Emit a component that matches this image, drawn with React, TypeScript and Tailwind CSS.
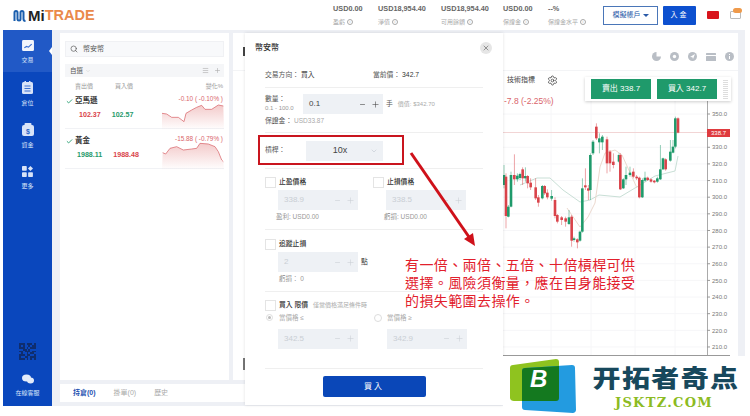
import { Check, ChevronDown, Menu, Minus, Plus, Search, Settings, X } from "lucide-react";

type Candle = [number, number, number, number, number, "g" | "r"];

const GREEN = "#1f9a6b";
const RED = "#d9434a";

// positions are in 3x crop units, converted when drawn
const candles: Candle[] = [
  [12, 195, 225, 165, 235, "g"], [18, 200, 318, 190, 355, "r"], [25, 290, 320, 285, 322, "g"], [33, 195, 290, 185, 292, "g"],
  [43, 195, 208, 133, 225, "r"], [52, 197, 208, 190, 215, "g"], [60, 192, 204, 188, 210, "g"], [68, 178, 205, 172, 225, "r"],
  [76, 198, 205, 172, 215, "g"], [83, 198, 220, 195, 235, "r"], [92, 218, 232, 205, 240, "r"], [107, 232, 265, 205, 270, "r"],
  [115, 262, 278, 255, 290, "r"], [127, 228, 265, 225, 268, "g"], [134, 228, 250, 225, 255, "r"], [142, 248, 262, 238, 268, "r"],
  [155, 258, 266, 240, 272, "g"], [165, 270, 318, 262, 325, "r"], [172, 315, 335, 312, 340, "r"], [185, 322, 330, 318, 345, "r"],
  [197, 325, 335, 320, 350, "r"], [207, 322, 342, 300, 345, "g"], [215, 320, 392, 315, 410, "r"], [222, 385, 390, 380, 395, "g"],
  [232, 388, 397, 385, 415, "r"], [240, 365, 392, 362, 395, "g"], [247, 235, 365, 205, 368, "g"], [256, 226, 232, 175, 240, "r"],
  [265, 235, 242, 225, 270, "r"], [271, 135, 240, 130, 270, "g"], [279, 95, 130, 90, 135, "g"], [289, 50, 85, 40, 90, "r"],
  [298, 85, 97, 70, 130, "g"], [307, 80, 97, 75, 120, "g"], [321, 88, 160, 80, 190, "r"], [330, 125, 160, 120, 185, "r"],
  [340, 155, 165, 130, 175, "r"], [357, 135, 155, 130, 158, "g"], [361, 135, 238, 130, 240, "r"], [370, 208, 235, 205, 237, "g"],
  [378, 195, 208, 170, 225, "g"], [390, 188, 195, 170, 200, "g"], [400, 185, 200, 175, 205, "r"], [410, 200, 205, 195, 210, "r"],
  [418, 203, 262, 200, 265, "r"], [427, 210, 262, 205, 264, "g"], [435, 203, 212, 185, 215, "g"], [443, 203, 210, 200, 213, "r"],
  [453, 208, 215, 205, 218, "r"], [463, 212, 217, 210, 220, "r"], [472, 205, 215, 200, 218, "g"], [481, 178, 208, 105, 210, "g"],
  [489, 145, 178, 143, 180, "g"], [497, 148, 178, 145, 182, "r"], [511, 125, 152, 90, 155, "g"], [519, 110, 128, 90, 130, "g"],
  [526, 25, 110, 20, 115, "g"], [534, 25, 68, 22, 70, "r"],
];

const axisLabels = [350, 330, 320, 310, 300, 290, 280, 270, 260, 250, 240, 230, 220, 210];
const priceY = (v: number) => 114 + (350 - v) * 1.664;

const stats = [
  { value: "USD0.00", label: "盈虧", width: "w-[45px]" },
  { value: "USD18,954.40", label: "淨值", width: "w-[63px]" },
  { value: "USD18,954.40", label: "可用餘額", width: "w-[62px]" },
  { value: "USD0.00", label: "保證金", width: "w-[45px]" },
  { value: "--%", label: "保證金水平", width: "w-[55px]" },
];

const Info = () => (
  <span className="ml-[2px] inline-flex h-[6px] w-[6px] items-center justify-center rounded-full border-[0.5px] border-[#aaa] text-[4px] leading-none text-[#aaa]">i</span>
);

const NavIcon = ({ name }: { name: string }) => {
  if (name === "交易") {
    return (
      <svg width="12" height="11" viewBox="0 0 13 12">
        <rect width="13" height="12" rx="1.5" fill="#f3f6fc" />
        <path d="M2.5 8.5 5 7l2 .8 3.5-3.3" stroke="#3a6fd0" strokeWidth="1.2" fill="none" />
      </svg>
    );
  }
  if (name === "倉位") {
    return (
      <svg width="11" height="13" viewBox="0 0 11 13">
        <rect y="1" width="11" height="12" rx="1.5" fill="#d8e3f8" />
        <rect x="2.5" width="1.5" height="2.5" fill="#d8e3f8" />
        <rect x="7" width="1.5" height="2.5" fill="#d8e3f8" />
        <path d="M2.5 5h6M2.5 7.5h6M2.5 10h6" stroke="#3a6fd0" strokeWidth="1" />
      </svg>
    );
  }
  if (name === "資金") {
    return (
      <svg width="12" height="13" viewBox="0 0 12 13">
        <rect y="2" width="12" height="11" rx="2" fill="#d8e3f8" />
        <rect x="2.5" width="7" height="2.5" rx="1" fill="#d8e3f8" />
        <text x="6" y="10.5" textAnchor="middle" fontSize="7" fontWeight="700" fill="#2b62c6" fontFamily="Liberation Sans">$</text>
      </svg>
    );
  }
  return (
    <svg width="11" height="11" viewBox="0 0 12 12" fill="#d8e3f8">
      <rect width="5.2" height="5.2" rx="0.8" />
      <path d="M9.2 0 12 2.7 9.2 5.4 6.5 2.7z" />
      <rect y="6.7" width="5.2" height="5.2" rx="0.8" />
      <rect x="6.7" y="6.7" width="5.2" height="5.2" rx="0.8" />
    </svg>
  );
};

const QrCode = () => {
  const cells = "111011101 101001011 111010111 001101000 110111011 010010110 111011001 100110111 111010101";
  return (
    <svg width="17" height="17" viewBox="0 0 9 9" shapeRendering="crispEdges">
      {cells.split(" ").map((row, y) =>
        row.split("").map((c, x) => (c === "1" ? <rect key={`${x}-${y}`} x={x} y={y} width="1" height="1" fill="#0f2d6e" /> : null))
      )}
    </svg>
  );
};

const Sidebar = () => (
  <aside className="flex w-[49px] flex-col bg-[#0a47bd] text-[#dbe6fa]">
    {["交易", "倉位", "資金", "更多"].map((name, i) => (
      <div key={name} className={`relative flex h-[42px] flex-col items-center justify-center gap-[6px] pt-[1px] ${i === 0 ? "bg-[#2159c6]" : ""}`}>
        <NavIcon name={name} />
        <span className="text-[6px] leading-[7px]">{name}</span>
        {i === 0 && <span className="absolute right-0 top-[17px] h-0 w-0 border-y-[4px] border-r-[3px] border-y-transparent border-r-white" />}
      </div>
    ))}
    <div className="mt-auto flex flex-col items-center pb-[9px]">
      <QrCode />
      <svg className="mt-[14px]" width="12" height="10" viewBox="0 0 12 10" fill="#e3ebfa">
        <ellipse cx="4.5" cy="4" rx="4.5" ry="3.6" />
        <ellipse cx="8.5" cy="6.5" rx="3.5" ry="3" />
      </svg>
      <span className="mt-[5px] text-[6px] leading-[8px]">在線客服</span>
    </div>
  </aside>
);

const Spark = ({ points, id }: { points: string; id: string }) => (
  <svg width="62" height="30" viewBox="486 300 186 90" className="block">
    <defs>
      <linearGradient id={id} x1="0" y1="0" x2="0" y2="1">
        <stop offset="0" stopColor="#e58b8b" stopOpacity="0.45" />
        <stop offset="1" stopColor="#e58b8b" stopOpacity="0" />
      </linearGradient>
    </defs>
    <polygon points={`486,390 ${points} 672,390`} fill={`url(#${id})`} />
    <polyline points={points} fill="none" stroke="#d9656b" strokeWidth="2.2" />
  </svg>
);

const WatchRow = ({ name, sell, buy, sellColor, buyColor, change, nameOffset, points, id }: {
  name: string; sell: string; buy: string; sellColor: string; buyColor: string; change: string; nameOffset: string; points: string; id: string;
}) => (
  <div className="relative h-[40px] border-b border-[#f1f2f5]">
    <div className="flex items-center pt-[5px]">
      <Check size={7} strokeWidth={3} className="ml-[1px] text-[#1f9a6b]" />
      <span className="ml-[2px] text-[7.5px] font-bold leading-[14px] text-[#333]">{name}</span>
      <span className="ml-auto -translate-y-[2px] pr-[1px] text-[6.4px] leading-[10px] text-[#d9656b]">{change}</span>
    </div>
    <div className={`mt-[1px] flex gap-[11px] text-[7.1px] font-bold leading-[12px] ${nameOffset}`}>
      <span className={sellColor}>{sell}</span>
      <span className={buyColor}>{buy}</span>
    </div>
    <div className="absolute right-0 top-[11px]">
      <Spark points={points} id={id} />
    </div>
  </div>
);

const WatchList = () => (
  <section className="flex h-[347px] w-[169px] flex-col bg-white px-[5px] pt-[8px]">
    <div className="flex h-[16px] items-center gap-[5px] border border-[#f0f1f4] bg-[#f8f9fb] pl-[4px] text-[7px] text-[#555]">
      <Search size={8} strokeWidth={2} />
      <span>幣安幣</span>
    </div>
    <div className="mt-[7px] flex h-[13px] items-center bg-[#f5f6f8] pl-[5px] pr-[3px] text-[6.5px] text-[#555]">
      <span>自選</span>
      <ChevronDown size={6} className="ml-[2px] text-[#ccc]" />
      <Menu size={7} className="ml-auto text-[#aaa]" />
      <Plus size={7} className="ml-[5px] text-[#aaa]" />
    </div>
    <div className="mt-[4px] flex h-[10px] items-center pl-[10px] pr-[1px] text-[6px] text-[#999]">
      <span className="w-[40px]">賣出價</span>
      <span>買入價</span>
      <span className="ml-auto">變化%</span>
    </div>
    <div className="-mt-[2px]">
      <WatchRow name="亞馬遜" sell="102.37" buy="102.57" sellColor="text-[#d9434a]" buyColor="text-[#1f9a6b]" change="-0.10 ( -0.10% )" nameOffset="pl-[14px]"
        points="486,340 500,342 515,352 535,352 552,365 558,340 575,330 590,322 605,316 615,328 635,328 655,315 670,318" id="sparkA" />
      <WatchRow name="黃金" sell="1988.11" buy="1988.48" sellColor="text-[#1f9a6b]" buyColor="text-[#d9434a]" change="-15.88 ( -0.79% )" nameOffset="pl-[12px]"
        points="488,338 497,342 510,325 530,320 550,330 575,327 590,325 600,310 625,312 645,320 655,335 665,360 670,365" id="sparkB" />
    </div>
  </section>
);

const ChartArt = () => (
  <svg width="505" height="266" viewBox="233 90 505 266" className="block">
    {axisLabels.map((v) => (
      <line key={v} x1="503" x2="707" y1={priceY(v)} y2={priceY(v)} stroke="#f6f6f8" />
    ))}
    {[551, 591, 635, 675].map((x) => (
      <line key={x} x1={x} x2={x} y1="100" y2="355" stroke="#f6f6f8" />
    ))}
    <line x1="503" x2="707" y1="132.5" y2="132.5" stroke="#f2d5d5" />
    <polyline points="520,185 537,178 550,178 563,190 580,202 590,200 599,195 620,197 640,185 655,176 675,171 678,156" fill="none" stroke="#c9dfd6" />
    <polyline points="567,208 580,227 588,217 595,203 600,167 605,153 615,150 622,155 637,188" fill="none" stroke="#ecd9cf" />
    {candles.map(([x, top, bot, wTop, wBot, c], i) => {
      const cx = 500 + x / 3;
      const fill = c === "g" ? GREEN : RED;
      return (
        <g key={i} fill={fill}>
          <rect x={cx - 0.4} y={110 + wTop / 3} width="0.8" height={(wBot - wTop) / 3} opacity="0.6" />
          <rect x={cx - 1.3} y={110 + top / 3} width="2.6" height={Math.max((bot - top) / 3, 1)} />
        </g>
      );
    })}
    <line x1="707.5" x2="707.5" y1="100" y2="355" stroke="#aaa" />
    <line x1="503" x2="730" y1="355.5" y2="355.5" stroke="#999" />
    {axisLabels.map((v) => (
      <g key={v}>
        <line x1="707" x2="710" y1={priceY(v)} y2={priceY(v)} stroke="#999" />
        <text x="712" y={priceY(v) + 2.2} fontSize="6" fill="#777" fontFamily="Liberation Sans">{v.toFixed(1)}</text>
      </g>
    ))}
  </svg>
);

const ToolIcon = ({ index }: { index: number }) => {
  if (index === 3) {
    return (
      <svg width="10" height="8" viewBox="0 0 10 8" fill="#b9bec5">
        <rect width="10" height="2" rx="0.5" />
        <rect y="3" width="10" height="5" rx="0.5" />
      </svg>
    );
  }
  return (
    <svg width="9" height="9" viewBox="0 0 9 9">
      <circle cx="4.5" cy="4.5" r="4.5" fill="#b9bec5" />
      {index === 0 && <path d="M4.5 0h4.5v4.5H4.5z" fill="#fff" />}
      {index === 1 && <circle cx="4.5" cy="4.5" r="1.7" fill="#fff" />}
      {index === 2 && <path d="M2 5 7 2 5 7 4.4 5.2z" fill="#fff" />}
      {index === 4 && <path d="M4 2h1v1H4zM4 4h1v3H4z" fill="#fff" />}
    </svg>
  );
};

const ChartPanel = () => (
  <section className="relative flex h-[347px] w-[505px] flex-col bg-white">
    <span className="absolute left-[10px] top-[14px] h-[9px] w-[2px] bg-[#444]" />
    <span className="absolute left-[10px] top-[325px] h-[12px] w-[2px] bg-[#777]" />
    <div className="flex h-[37px] items-end justify-end gap-[9px] pb-[9px] pr-[4px]">
      {[0, 1, 2, 3, 4].map((i) => (
        <span key={i} className="flex h-[9px] items-center"><ToolIcon index={i} /></span>
      ))}
    </div>
    <div className="flex h-[20px] items-center border-t border-[#f3f4f6] pl-[274px] text-[7px] text-[#444]">
      <span>技術指標</span>
      <Settings size={11} strokeWidth={1.5} className="ml-[12px] text-[#333]" />
    </div>
    <ChartArt />
    <span className="absolute left-[271px] top-[62px] text-[8.5px] text-[#d9656b]">-7.8 (-2.25%)</span>
    <div className="absolute left-[352px] top-[44px] flex h-[24px] w-[146px] items-center gap-[6px] bg-white pl-[6px] shadow-[0_1px_3px_rgba(0,0,0,0.2)]">
      <button className="h-[20px] w-[60px] bg-[#1f9a6b] text-[8px] text-white">賣出 338.7</button>
      <button className="h-[20px] w-[60px] bg-[#1f9a6b] text-[8px] text-white">買入 342.7</button>
      <span className="h-[19px] w-[5px] bg-[repeating-linear-gradient(0deg,#ddd_0,#ddd_1px,transparent_1px,transparent_2px)]" />
    </div>
    <span className="absolute left-[474px] top-[96px] flex h-[8px] w-[23px] items-center justify-center bg-[#df3b3f] text-[6px] text-white">338.7</span>
  </section>
);

const Stepper = ({ value, disabled = true, className = "" }: { value: string; disabled?: boolean; className?: string }) => (
  <div className={`flex h-[20px] w-[80px] items-center bg-[#eef1f5] pl-[6px] pr-[3px] ${disabled ? "text-[#c9ced4]" : "text-[#444]"} ${className}`}>
    <span className="text-[8px]">{value}</span>
    <Minus size={7} strokeWidth={2} className="ml-auto" />
    <Plus size={9} strokeWidth={1.5} className="ml-[5px]" />
  </div>
);

const CheckBox = () => <span className="h-[11px] w-[11px] border border-[#e4e4e4] bg-white" />;

const TradeModal = () => (
  <div className="absolute left-[245px] top-[33px] flex h-[372px] w-[258px] flex-col bg-white text-[#555] shadow-[0_0_3px_rgba(0,0,0,0.12)]">
    <div className="flex h-[30px] items-center justify-between pl-[10px] pr-[11px]">
      <span className="text-[8px] font-medium text-[#333]">幣安幣</span>
      <span className="flex h-[12px] w-[12px] items-center justify-center rounded-full bg-[#e6e6e6]">
        <X size={8} strokeWidth={2} className="text-[#666]" />
      </span>
    </div>
    <div className="mx-[20px] flex flex-col text-[6.8px]">
      <div className="flex h-[25px] items-center border-b border-[#efefef]">
        <span className="w-[108px]">交易方向： <span className="text-[#333]">買入</span></span>
        <span>當前價： <span className="text-[#333]">342.7</span></span>
      </div>
      <div className="h-[45px] border-b border-[#efefef] pt-[6px]">
        <div className="flex">
          <div className="w-[38px]">
            <div className="leading-[10px]">數量：</div>
            <div className="text-[6px] leading-[9px] text-[#999]">0.1 - 100.0</div>
          </div>
          <Stepper value="0.1" disabled={false} />
          <span className="ml-[3px] self-center">手</span>
          <span className="ml-[5px] self-center text-[6px] text-[#aaa]">價值: $342.70</span>
        </div>
        <div className="mt-[1px] leading-[12px]">保證金： <span className="text-[6.5px] text-[#aaa]">USD33.87</span></div>
      </div>
      <div className="flex h-[36px] items-center border-b border-[#efefef]">
        <span className="w-[41px]">槓桿：</span>
        <div className="relative flex h-[20px] w-[77px] items-center justify-center bg-[#eef1f5] pr-[9px] text-[9px] text-[#444]">
          10x
          <ChevronDown size={8} className="absolute right-[5px] text-[#c6ccd3]" />
        </div>
      </div>
      <div className="grid h-[61px] grid-cols-[108px_1fr] border-b border-[#efefef] pt-[8px]">
        {[
          { label: "止盈價格", value: "338.9", note: "盈利: USD0.00" },
          { label: "止損價格", value: "338.5", note: "虧損: USD0.00" },
        ].map((item) => (
          <div key={item.label}>
            <div className="flex items-center gap-[3px] font-medium text-[#333]"><CheckBox />{item.label}</div>
            <Stepper value={item.value} className="ml-[13px] mt-[2px]" />
            <div className="ml-[11px] mt-[2px] text-[6.5px] text-[#999]">{item.note}</div>
          </div>
        ))}
      </div>
      <div className="h-[62px] border-b border-[#efefef] pt-[9px]">
        <div className="flex items-center gap-[3px] font-medium text-[#333]"><CheckBox />追蹤止損</div>
        <div className="ml-[13px] mt-[2px] flex items-center">
          <Stepper value="2" />
          <span className="ml-[3px] text-[#333]">點</span>
        </div>
        <div className="ml-[14px] mt-[2px] text-[6.5px] text-[#999]">虧損： 0</div>
      </div>
      <div className="h-[77px] border-b border-[#efefef] pt-[8px]">
        <div className="flex items-center gap-[3px] font-medium text-[#333]">
          <CheckBox />買入 限價
          <span className="ml-[2px] text-[6px] font-normal text-[#aaa]">僅當價格滿足條件時</span>
        </div>
        <div className="mt-[2px] grid grid-cols-[108px_1fr] text-[6.5px] text-[#aaa]">
          <div className="flex items-center"><span className="ml-[1px] mr-[6px] flex h-[7px] w-[7px] items-center justify-center rounded-full border border-[#ddd]"><span className="h-[3px] w-[3px] rounded-full bg-[#bbb]" /></span>當價格 ≤</div>
          <div className="flex items-center"><span className="ml-[1px] mr-[5px] h-[8px] w-[8px] rounded-full border border-[#ddd]" />當價格 ≥</div>
        </div>
        <div className="mt-[6px] grid grid-cols-[109px_1fr] pl-[13px]">
          <Stepper value="342.5" />
          <Stepper value="342.9" />
        </div>
      </div>
    </div>
    <button className="mx-auto mt-[7px] h-[21px] w-[103px] rounded-[2px] bg-[#0a47b8] text-[8px] tracking-[2px] text-white">買入</button>
  </div>
);

const Annotation = () => (
  <>
    <div className="absolute left-[258px] top-[135px] h-[30px] w-[146px] border-2 border-[#c9151e]" />
    <svg className="absolute left-[405px] top-[148px]" width="75" height="102" viewBox="405 148 75 102">
      <line x1="411" y1="153" x2="469" y2="237" stroke="#cf111a" strokeWidth="3" />
      <polygon points="475,246 464,239 473,233" fill="#cf111a" />
    </svg>
    <p className="absolute left-[405px] top-[256px] whitespace-nowrap text-[14px] leading-[18px] tracking-[0.4px] text-[#e2202c]">
      有一倍、兩倍、五倍、十倍槓桿可供<br />
      選擇。風險須衡量，應在自身能接受<br />
      的損失範圍去操作。
    </p>
  </>
);

const Watermark = () => (
  <div className="absolute left-[503px] top-[356px] flex h-[60px] w-[247px] bg-white">
    <svg className="ml-[7px] mt-[2px] shrink-0" width="66" height="56" viewBox="0 0 66 56">
      <path d="M3 7 46 1c2 0 3 1 3 3v36c0 2-1 3-3 3H4c-2 0-4-1-4-3V10c0-2 1-3 3-3z" fill="#8fc31f" />
      <path d="M15 10 62 7c2 0 3 1 3 3l1 42c0 2-2 3-3 3L15 52c-2 0-3-1-3-3V13c0-2 1-3 3-3z" fill="#239be0" />
      <path d="M15 10 49 8v32c0 2-1 3-3 3H12V13c0-2 1-3 3-3z" fill="#14791f" />
      <text x="20" y="29" fontSize="24" fontWeight="900" fontStyle="italic" fill="#fff" fontFamily="Liberation Sans">B</text>
    </svg>
    <div className="ml-[15px] flex w-[150px] flex-col items-center pt-[6px]">
      <span className="scale-y-[0.85] whitespace-nowrap font-['Noto_Sans_CJK_SC',sans-serif] text-[28px] font-black leading-[30px] tracking-[1.4px] text-[#17485c]">开拓者奇点</span>
      <span className="mt-[4px] -translate-x-[2px] whitespace-nowrap font-['DejaVu_Serif',serif] text-[13px] font-bold leading-[14px] tracking-[1.3px] text-[#8cbb22]">JSKTZ.COM</span>
    </div>
  </div>
);

export default function App() {
  return (
    <div className="relative h-[416px] w-[750px] overflow-hidden bg-white font-['Liberation_Sans','Noto_Sans_CJK_TC',sans-serif]">
      <header className="flex h-[30px] items-center">
        <div className="flex w-[333px] items-center pl-[13px]">
          <svg width="14" height="13" viewBox="0 0 14 13" fill="none" stroke="#1b5fae" strokeWidth="2">
            <path d="M1.5 12V3.5C1.5 1.5 4.5 1.5 4.5 3.5V10c0 2 3 2 3 0V3.5c0-2 3-2 3 0V10c0 1 1 2 2 2" />
          </svg>
          <span className="ml-[1px] text-[15px] font-bold leading-none text-[#222]">Mi</span>
          <span className="text-[14.5px] font-bold leading-none text-[#ea8a4b]">TRADE</span>
        </div>
        {stats.map((s) => (
          <div key={s.label + s.width} className={`${s.width} flex flex-col gap-[5px]`}>
            <span className="whitespace-nowrap text-[7.3px] font-bold leading-[9px] text-[#666]">{s.value}</span>
            <span className="flex items-center whitespace-nowrap text-[6px] leading-[8px] text-[#aaa]">{s.label}<Info /></span>
          </div>
        ))}
        <button className="flex h-[19px] w-[55px] items-center justify-center gap-[2px] border border-[#4a76b8] text-[7px] text-[#2a5aa8]">
          模擬帳戶
          <span className="h-0 w-0 border-x-[3px] border-t-[3px] border-x-transparent border-t-[#2a5aa8]" />
        </button>
        <button className="ml-[5px] h-[19px] w-[33px] rounded-[1px] bg-[#0d50cf] text-[7px] tracking-[2px] text-white">入金</button>
        <span className="ml-[11px] h-[8px] w-[12px] rounded-[1px] bg-[#d8141c]" />
        <span className="relative ml-[11px] h-[8px] w-[11px] rounded-[1px] border border-[#bbb] bg-white">
          <span className="absolute -top-[4px] left-[2px] h-[5px] w-[9px] rounded-full bg-[#ef9a4b]" />
        </span>
      </header>
      <div className="flex h-[376px] pl-[3px] pr-[5px]">
        <Sidebar />
        <main className="flex-1 bg-[#eef0f5] pl-[8px] pt-[3px]">
          <div className="flex gap-[4px]">
            <WatchList />
            <ChartPanel />
          </div>
          <div className="mt-[4px] flex h-[18px] w-[678px] items-center gap-[18px] bg-white pl-[13px] text-[7px] text-[#aaa]">
            <span className="font-bold text-[#1d50b0]">持倉(0)</span>
            <span>掛單(0)</span>
            <span>歷史</span>
          </div>
        </main>
      </div>
      <TradeModal />
      <Annotation />
      <Watermark />
    </div>
  );
}
